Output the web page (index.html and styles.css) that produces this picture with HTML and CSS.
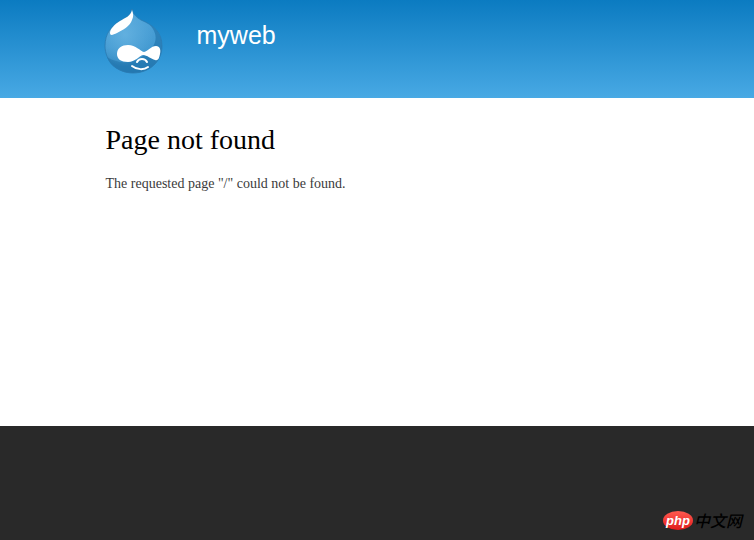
FILE: index.html
```
<!DOCTYPE html>
<html lang="en">
<head>
  <meta charset="utf-8">
  <meta name="viewport" content="width=device-width, initial-scale=1">
  <title>Page not found | myweb</title>
  <link rel="stylesheet" href="styles.css">
</head>
<body>
  <header class="header">
    <a href="/" class="logo" aria-label="Home">
      <svg width="58" height="66" viewBox="1 0 58 66" aria-hidden="true">
        <defs>
          <linearGradient id="drop" x1="0" y1="0" x2="0" y2="1">
            <stop offset="0" stop-color="#4fa3d8"/>
            <stop offset="0.6" stop-color="#4299d1"/>
            <stop offset="1" stop-color="#2f85bd"/>
          </linearGradient>
          <radialGradient id="glow" cx="0.35" cy="0.4" r="0.5">
            <stop offset="0" stop-color="#6db8e4" stop-opacity="0.7"/>
            <stop offset="1" stop-color="#6db8e4" stop-opacity="0"/>
          </radialGradient>
        </defs>
        <path d="M27 1 C28 6 31 9 36 12 C48 17 57 24 57 38 C57 54 44 65 28 65 C12 65 0 53 0 38 C0 26 6 18 15 13 C22 9 26 7 27 1 Z" fill="url(#drop)"/>
        <path d="M44 16 C53 22 57 29 57 38 C57 54 44 65 28 65 C16 65 5 59 2 49 C12 56 30 57 40 46 C50 40 56 28 44 16 Z" fill="#1d6fa8" fill-opacity="0.6"/>
        <path d="M27 1 C28 6 31 9 36 12 C48 17 57 24 57 38 C57 54 44 65 28 65 C12 65 0 53 0 38 C0 26 6 18 15 13 C22 9 26 7 27 1 Z" fill="url(#glow)" stroke="#2a7bb2" stroke-opacity="0.8"/>
        <path d="M27 2 C28 5 29 8 27 12 C25 18 18 22 12 25 C8 27 5 28 5 25 C5 21 10 16 15 13 C20 10 26 8 27 2 Z" fill="#fff"/>
        <path d="M12 46 C12 40 17 37 23 37 C31 37 35 43 39 44 C43 43 46 38 51 38 C55 38 56 42 55 46 C54 51 53 53 50 52 C46 51 42 47 38 47 C34 48 30 54 23 54 C16 54 12 51 12 46 Z" fill="#fff"/>
        <path d="M32 54 C34 50 40 50 42 54" fill="none" stroke="#fff" stroke-width="2" stroke-linecap="round"/>
        <path d="M27 58 C32 62 39 62 43 59" fill="none" stroke="#fff" stroke-width="2" stroke-linecap="round"/>
      </svg>
    </a>
    <a href="/" class="site-name">myweb</a>
  </header>

  <main class="content">
    <h1>Page not found</h1>
    <p>The requested page "/" could not be found.</p>
  </main>

  <footer class="footer">
    <div class="badge">
      <span class="badge-php">php</span>
      <span class="badge-name" lang="zh">中文网</span>
    </div>
  </footer>
</body>
</html>
```

FILE: styles.css
```
body {
  display: flex;
  flex-direction: column;
  min-height: 100vh;
  margin: 0;
  background-color: #fff;
  color: #3b3b3b;
  font-family: "Liberation Serif", "Times New Roman", serif;
}

.header {
  display: flex;
  align-items: flex-start;
  gap: 33px;
  padding: 8px 14% 24px;
  background-image: linear-gradient(#0b7bc1, #48a9e4);
}

.logo svg {
  display: block;
  overflow: visible;
}

.site-name {
  margin-top: 12px;
  color: #fff;
  font-family: "Liberation Sans", Arial, sans-serif;
  font-size: 25px;
  line-height: 30px;
  text-decoration: none;
}

.content {
  flex: 1;
  padding: 24px 14%;
}

.content h1 {
  margin: 0 0 16px;
  color: #000;
  font-size: 28px;
  font-weight: normal;
  line-height: 36px;
}

.content p {
  margin: 0;
  font-size: 14px;
  line-height: 20px;
}

.footer {
  display: flex;
  align-items: flex-end;
  justify-content: flex-end;
  box-sizing: border-box;
  min-height: 114px;
  padding: 10px 12px;
  background-color: #292929;
}

.badge {
  display: flex;
  align-items: center;
  gap: 1px;
}

.badge-php {
  width: 30px;
  border-radius: 50%;
  background-image: linear-gradient(#ff5a50, #e01b1b);
  color: #fff;
  font-family: "Liberation Sans", Arial, sans-serif;
  font-size: 13px;
  font-style: italic;
  font-weight: bold;
  line-height: 19px;
  text-align: center;
}

.badge-name {
  color: #000;
  font-family: "Noto Sans CJK SC", sans-serif;
  font-size: 16px;
  font-style: italic;
  font-weight: 500;
  line-height: 19px;
}
```
